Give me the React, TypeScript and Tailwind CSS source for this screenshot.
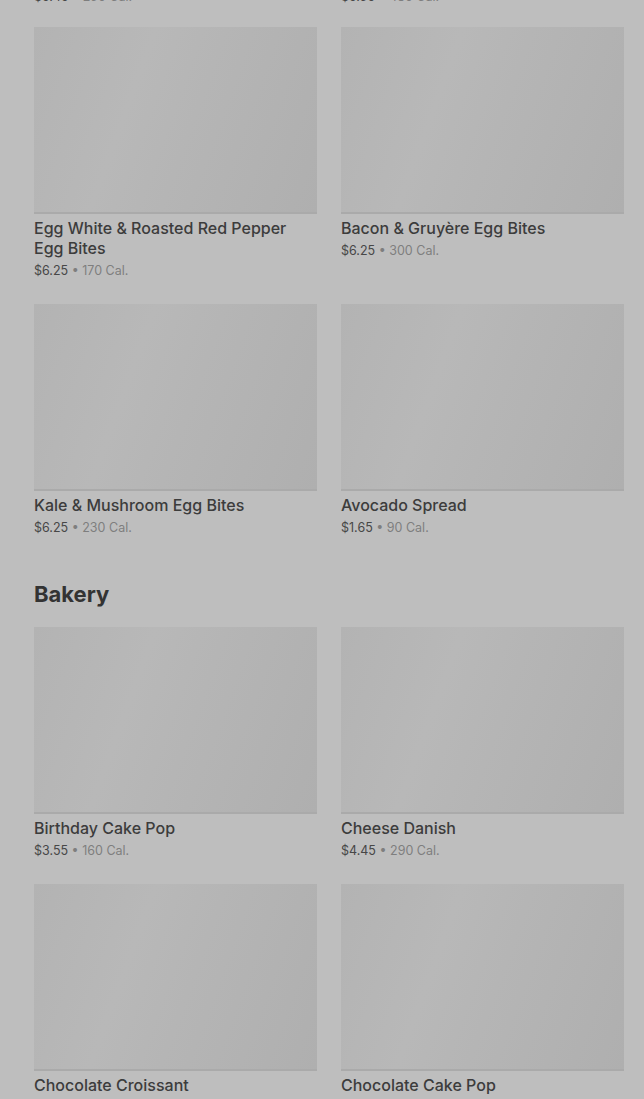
import React from "react";

type Item = { name: string; price: string; cal: string };

const prevRow: Item[] = [
  { name: "Spinach Feta Wrap", price: "$5.45", cal: "290 Cal." },
  { name: "Sausage Sandwich", price: "$5.95", cal: "480 Cal." },
];

const eggBites: Item[] = [
  { name: "Egg White & Roasted Red Pepper Egg Bites", price: "$6.25", cal: "170 Cal." },
  { name: "Bacon & Gruyère Egg Bites", price: "$6.25", cal: "300 Cal." },
  { name: "Kale & Mushroom Egg Bites", price: "$6.25", cal: "230 Cal." },
  { name: "Avocado Spread", price: "$1.65", cal: "90 Cal." },
];

const bakery: Item[] = [
  { name: "Birthday Cake Pop", price: "$3.55", cal: "160 Cal." },
  { name: "Cheese Danish", price: "$4.45", cal: "290 Cal." },
  { name: "Chocolate Croissant", price: "$4.25", cal: "340 Cal." },
  { name: "Chocolate Cake Pop", price: "$3.55", cal: "150 Cal." },
];

function Card({ item }: { item: Item }) {
  return (
    <div className="flex flex-col">
      <div className="h-[187px] w-full bg-[linear-gradient(110deg,#b3b3b3_0%,#b8b8b8_35%,#b5b5b5_55%,#afafaf_100%)] border-b-2 border-[#aaaaaa]" />
      <div className="mt-1 text-[16px] leading-5 font-medium text-[#3c3c3c] pr-6">{item.name}</div>
      <div className="mt-[3px] text-[12.5px] leading-5 text-[#474747]">
        {item.price}
        <span className="text-[#7e7e7e]"> • {item.cal}</span>
      </div>
    </div>
  );
}

function Grid({ items }: { items: Item[] }) {
  return (
    <div className="grid grid-cols-[283px_283px] gap-x-6 gap-y-[23px]">
      {items.map((it) => (
        <Card key={it.name} item={it} />
      ))}
    </div>
  );
}

export default function App() {
  return (
    <div
      className="h-[1099px] overflow-hidden bg-[#bebebe]"
      style={{ fontFamily: "Inter, 'Open Sans', sans-serif" }}
    >
      <div className="pl-[34px] pr-5 mt-[-227px]">
        <Grid items={prevRow} />
        <div className="mt-5">
          <Grid items={eggBites} />
        </div>
        <h2 className="mt-[42px] mb-[19px] text-[22px] leading-7 font-bold text-[#333333]">Bakery</h2>
        <Grid items={bakery} />
      </div>
    </div>
  );
}
